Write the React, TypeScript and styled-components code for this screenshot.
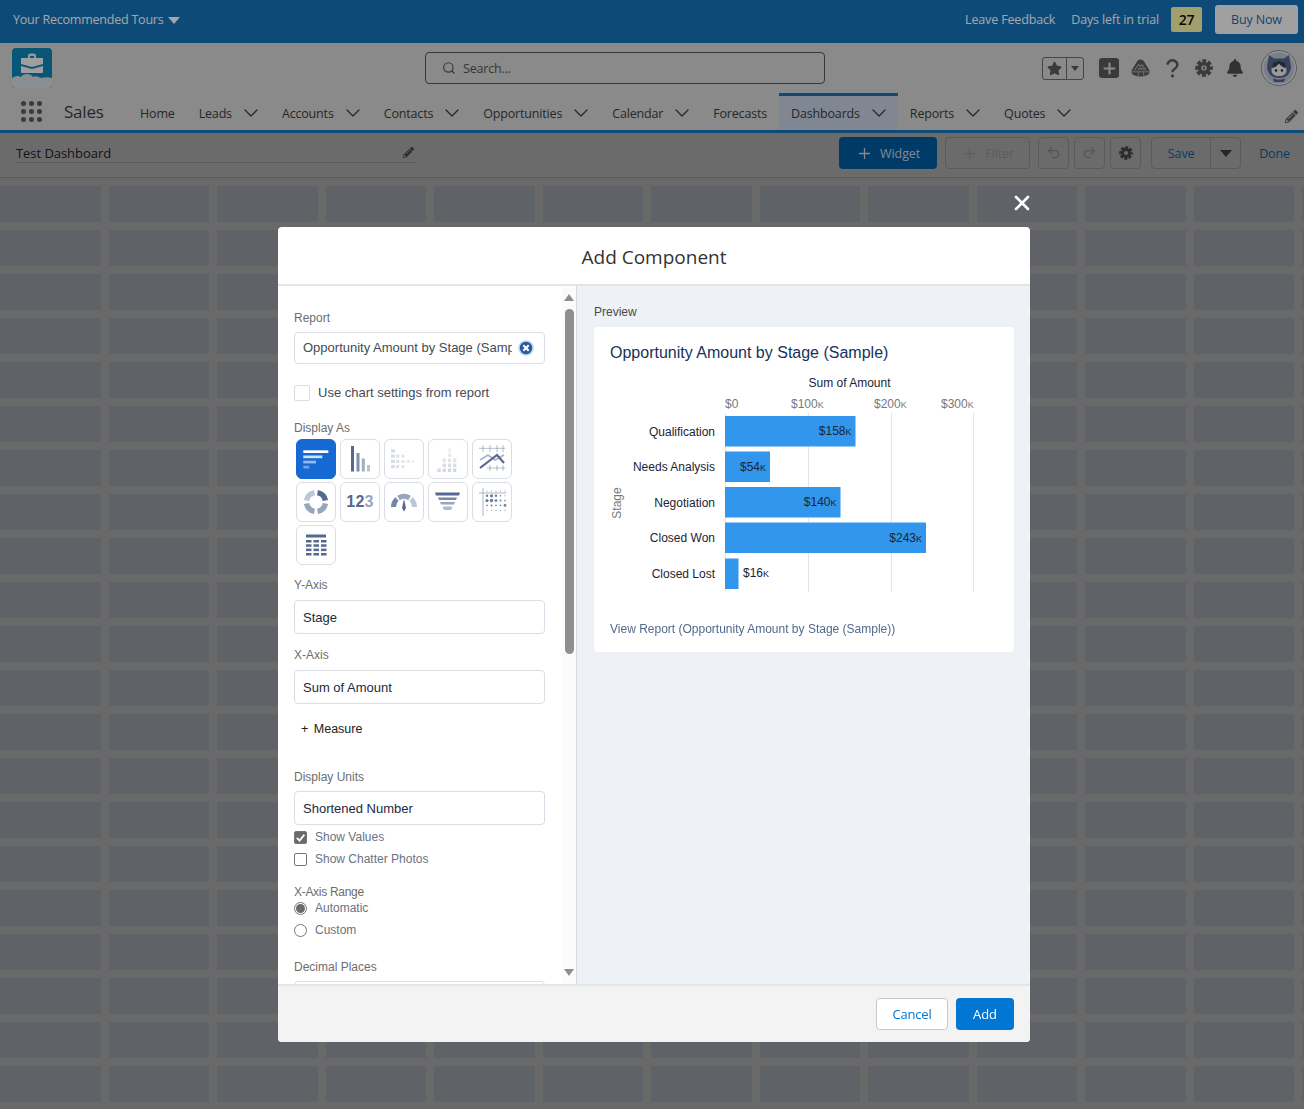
import React from "react";
import styled, { createGlobalStyle } from "styled-components";
import { ChevronDown, Plus, Redo2, Search, Undo2, X } from "lucide-react";
import { FaBell, FaPencilAlt, FaStar } from "react-icons/fa";

const BRAND = `"Open Sans", "Noto Sans", sans-serif`;
const ARIAL = `"Liberation Sans", Arial, sans-serif`;

const GlobalStyle = createGlobalStyle`
	html, body {
		margin: 0;
		padding: 0;
		background: #a1a1a1;
		font-family: ${BRAND};
		overflow: hidden;
	}
	* {
		box-sizing: border-box;
	}
`;

const NAV_ITEMS: { label: string; menu: boolean; active?: boolean }[] = [
	{ label: "Home", menu: false },
	{ label: "Leads", menu: true },
	{ label: "Accounts", menu: true },
	{ label: "Contacts", menu: true },
	{ label: "Opportunities", menu: true },
	{ label: "Calendar", menu: true },
	{ label: "Forecasts", menu: false },
	{ label: "Dashboards", menu: true, active: true },
	{ label: "Reports", menu: true },
	{ label: "Quotes", menu: true },
];

const BARS = [
	{ label: "Qualification", value: "$158", top: 416, right: 855.5, labelY: 436, valueY: 435, inside: true },
	{ label: "Needs Analysis", value: "$54", top: 451.5, right: 770, labelY: 471, valueY: 471, inside: true },
	{ label: "Negotiation", value: "$140", top: 487, right: 840.5, labelY: 507, valueY: 506, inside: true },
	{ label: "Closed Won", value: "$243", top: 522.5, right: 926, labelY: 542, valueY: 542, inside: true },
	{ label: "Closed Lost", value: "$16", top: 558.5, right: 738.5, labelY: 578, valueY: 577, inside: false },
];

const TICKS = [
	{ label: "$0", x: 725, line: 725.5 },
	{ label: "$100", x: 791, line: 808.5 },
	{ label: "$200", x: 874, line: 891.5 },
	{ label: "$300", x: 941, line: 973.5 },
];

const App: React.FC = () => {
	return (
		<>
			<GlobalStyle />
			<Page>
				<TrialBar>
					<TourMenu>
						Your Recommended Tours <Caret />
					</TourMenu>
					<TrialActions>
						<span>Leave Feedback</span>
						<span>Days left in trial</span>
						<DaysBadge>27</DaysBadge>
						<BuyButton>Buy Now</BuyButton>
					</TrialActions>
				</TrialBar>
				<GlobalHeader>
					<Logo />
					<SearchBox>
						<Search size={14} strokeWidth={2} />
						Search...
					</SearchBox>
					<HeaderIcons>
						<FavoriteGroup>
							<FavoriteStar>
								<FaStar size={15} />
							</FavoriteStar>
							<FavoriteMenu>
								<SmallCaret />
							</FavoriteMenu>
						</FavoriteGroup>
						<IconSlots>
							<IconSlot>
								<AddIcon>
									<Plus size={17} strokeWidth={3} />
								</AddIcon>
							</IconSlot>
							<IconSlot>
								<TrailheadIcon />
							</IconSlot>
							<IconSlot>
								<QuestionIcon />
							</IconSlot>
							<IconSlot>
								<GearIcon size={18} color="#5a5a5a" bolt />
							</IconSlot>
							<IconSlot>
								<FaBell size={18} color="#4e4e4e" />
							</IconSlot>
						</IconSlots>
						<Avatar />
					</HeaderIcons>
				</GlobalHeader>
				<NavBar>
					<Waffle>
						{Array.from({ length: 9 }).map((_, i) => (
							<i key={i} />
						))}
					</Waffle>
					<AppName>Sales</AppName>
					<NavList>
						{NAV_ITEMS.map((item) => (
							<NavItem key={item.label} $active={item.active}>
								{item.label}
								{item.menu && (
									<NavChevron>
										<ChevronDown size={24} strokeWidth={1.3} />
									</NavChevron>
								)}
							</NavItem>
						))}
					</NavList>
					<NavEdit>
						<FaPencilAlt size={13} color="#5a5a5a" />
					</NavEdit>
				</NavBar>
				<Toolbar>
					<TitleField>
						Test Dashboard
						<FaPencilAlt size={11} color="#444" />
					</TitleField>
					<ToolbarActions>
						<WidgetButton>
							<Plus size={17} strokeWidth={1.8} />
							Widget
						</WidgetButton>
						<FilterButton>
							<Plus size={17} strokeWidth={1.8} />
							Filter
						</FilterButton>
						<IconButton $muted>
							<Undo2 size={15} />
						</IconButton>
						<IconButton $muted>
							<Redo2 size={15} />
						</IconButton>
						<IconButton>
							<GearIcon size={14} color="#444" />
						</IconButton>
						<SaveGroup>
							<SaveLabel>Save</SaveLabel>
							<SaveMenu>
								<Caret $dark />
							</SaveMenu>
						</SaveGroup>
						<DoneLink>Done</DoneLink>
					</ToolbarActions>
				</Toolbar>
				<DashboardGrid>
					{Array.from({ length: 13 * 21 }).map((_, i) => (
						<GridCell key={i} />
					))}
				</DashboardGrid>
			</Page>

			<Backdrop>
				<Modal>
					<CloseButton>
						<X size={24} strokeWidth={2.6} />
					</CloseButton>
					<ModalHeader>Add Component</ModalHeader>
					<ModalBody>
						<FormPane>
							<FormColumn>
								<FieldLabel $top={25}>Report</FieldLabel>
								<ReportInput>
									<ReportText>Opportunity Amount by Stage (Sample)</ReportText>
									<ClearIcon />
								</ReportInput>
								<ReportToggle>
									<LargeCheck />
									Use chart settings from report
								</ReportToggle>
								<FieldLabel $top={21}>Display As</FieldLabel>
								<TileGrid>
									<Tile $active>
										<HBarTile />
									</Tile>
									<Tile>
										<VBarTile />
									</Tile>
									<Tile>
										<StackedHTile />
									</Tile>
									<Tile>
										<StackedVTile />
									</Tile>
									<Tile>
										<LineTile />
									</Tile>
									<Tile>
										<DonutTile />
									</Tile>
									<Tile>
										<Metric>
											12<span>3</span>
										</Metric>
									</Tile>
									<Tile>
										<GaugeTile />
									</Tile>
									<Tile>
										<FunnelTile />
									</Tile>
									<Tile>
										<HeatTile />
									</Tile>
									<Tile>
										<TableTile />
									</Tile>
								</TileGrid>
								<FieldLabel $top={13}>Y-Axis</FieldLabel>
								<TextInput>Stage</TextInput>
								<FieldLabel $top={14}>X-Axis</FieldLabel>
								<TextInput>Sum of Amount</TextInput>
								<MeasureLink>
									<span>+</span> Measure
								</MeasureLink>
								<FieldLabel $top={33}>Display Units</FieldLabel>
								<TextInput $tight>Shortened Number</TextInput>
								<OptionRow $top={1}>
									<SmallCheck $checked>
										<svg viewBox="0 0 12 12" width="11" height="11">
											<path d="M2 6.5 5 9.4 10.2 2.8" fill="none" stroke="#fff" strokeWidth="2" />
										</svg>
									</SmallCheck>
									Show Values
								</OptionRow>
								<OptionRow $top={0}>
									<SmallCheck />
									Show Chatter Photos
								</OptionRow>
								<FieldLabel $top={15} $narrow>
									X-Axis Range
								</FieldLabel>
								<OptionRow $top={-3}>
									<Radio $checked />
									Automatic
								</OptionRow>
								<OptionRow $top={0}>
									<Radio />
									Custom
								</OptionRow>
								<FieldLabel $top={19}>Decimal Places</FieldLabel>
								<TextInput $tight />
							</FormColumn>
							<ScrollTrack>
								<ScrollArrow $up />
								<ScrollThumb />
								<ScrollArrow />
							</ScrollTrack>
						</FormPane>
						<PreviewPane>
							<PreviewLabel>Preview</PreviewLabel>
							<PreviewCard>
								<CardTitle>Opportunity Amount by Stage (Sample)</CardTitle>
								<BarChart />
								<ReportLink>View Report (Opportunity Amount by Stage (Sample))</ReportLink>
							</PreviewCard>
						</PreviewPane>
					</ModalBody>
					<ModalFooter>
						<CancelButton>Cancel</CancelButton>
						<AddButton>Add</AddButton>
					</ModalFooter>
				</Modal>
			</Backdrop>
		</>
	);
};
export default App;

/* ---- drawings ---- */

const Logo = () => (
	<LogoBox>
		<svg viewBox="0 0 40 40" width="40" height="40">
			<rect width="40" height="40" rx="4" fill="#0e86b8" />
			<path d="M0 30c3-2 6-3 9-1 2-4 10-4 12 0 3-2 6 0 8 1 3-1 7-1 11 0v6a4 4 0 0 1-4 4H4a4 4 0 0 1-4-4z" fill="#d5dade" />
			<path d="M16 10V7.500c0-1 1-2 2-2h4c1 0 2 1 2 2V10h-2V8h-4v2z" fill="#e9e9e9" />
			<path d="M10 10h20c.6 0 1 .4 1 1v5l-11 3-11-3v-5c0-.6.4-1 1-1z" fill="#f4f4f4" />
			<path d="M9 18l11 3 11-3v6c0 .6-.4 1-1 1H10c-.6 0-1-.4-1-1z" fill="#f4f4f4" />
		</svg>
	</LogoBox>
);

const TrailheadIcon = () => (
	<svg viewBox="0 0 22 22" width="21" height="21">
		<path d="M11 1.500c2 0 3 1 4 2.600l4.800 8c1.400 2.400.6 5-2 6-2 .8-4.400 1.400-6.800 1.400s-4.800-.6-6.800-1.400c-2.600-1-3.400-3.600-2-6l4.800-8C8 2.500 9 1.500 11 1.500z" fill="#5a5a5a" />
		<path d="M4.500 13 9 7l2 2 1.500-2 4.500 6M8 13l2-2.500 1.500 1.500 1.500-1.500 2 2.500" fill="none" stroke="#a5a5a5" strokeWidth="1.200" />
		<path d="M1.500 14.500h19M9 15l-1 5M14 15l1 5" stroke="#b5b5b5" strokeWidth="1" />
	</svg>
);

const QuestionIcon = () => (
	<svg viewBox="0 0 14 20" width="13" height="19">
		<path d="M1.800 6a5.200 4.800 0 1 1 8 4c-2 1.300-2.800 2.200-2.800 4" fill="none" stroke="#5a5a5a" strokeWidth="2.600" />
		<circle cx="7" cy="18" r="1.700" fill="#5a5a5a" />
	</svg>
);

const GearIcon: React.FC<{ size: number; color: string; bolt?: boolean }> = ({ size, color, bolt }) => (
	<svg viewBox="0 0 20 20" width={size} height={size}>
		<circle cx="10" cy="10" r="5" fill="none" stroke={color} strokeWidth="4" />
		<circle cx="10" cy="10" r="8.200" fill="none" stroke={color} strokeWidth="3.200" strokeDasharray="4.440 2" strokeDashoffset="2.200" />
		{bolt ? <path d="M11 6.500 8 10.500h2L9 13.500l3-4h-2z" fill={color} /> : null}
	</svg>
);

const Avatar = () => (
	<svg viewBox="0 0 36 36" width="36" height="36">
		<circle cx="18" cy="18" r="17.500" fill="#dfe3e8" stroke="#8a8a8a" />
		<circle cx="18" cy="18" r="15.500" fill="#bcc4cf" />
		<path d="M8 5l5 3.500h10L28 5l1.500 9c1 3 .5 6-1.500 9-1 3-5 5-10 5s-9-2-10-5c-2-3-2.500-6-1.500-9z" fill="#54698d" />
		<path d="M10.500 20c0-4 3-6.500 7.500-6.500s7.500 2.500 7.500 6.500-3 6-7.500 6-7.500-2-7.500-6z" fill="#ececec" />
		<path d="M11 18c3-.5 5-2 7-4.500 2 2.500 4 4 7 4.500l-1-5-6-2-6 2z" fill="#2f3f57" />
		<circle cx="15" cy="20.500" r="1.200" fill="#222" />
		<circle cx="21" cy="20.500" r="1.200" fill="#222" />
		<path d="M12 28c3 2 9 2 12 0l-1 4H13z" fill="#54698d" />
	</svg>
);

const TILE_DARK = "#54698d";

const HBarTile = () => (
	<svg viewBox="0 0 40 40" width="40" height="40">
		<rect x="7.300" y="11.300" width="25" height="2.700" fill="#fff" />
		<rect x="7.300" y="16.500" width="19" height="2.700" fill="#fff" opacity=".8" />
		<rect x="7.300" y="21.700" width="12.700" height="2.700" fill="#fff" opacity=".55" />
		<rect x="7.300" y="26.800" width="6" height="2.700" fill="#fff" opacity=".4" />
	</svg>
);

const VBarTile = () => (
	<svg viewBox="0 0 40 40" width="40" height="40">
		<rect x="11" y="7" width="3" height="25.500" fill={TILE_DARK} />
		<rect x="16.500" y="14" width="3" height="18.500" fill={TILE_DARK} opacity=".75" />
		<rect x="21.800" y="19.500" width="3" height="13" fill={TILE_DARK} opacity=".55" />
		<rect x="27" y="26" width="3" height="6.500" fill={TILE_DARK} opacity=".4" />
	</svg>
);

const StackedHTile = () => {
	const rows = [
		[4, 0, 0, 0, 0],
		[4, 3, 3, 0, 0],
		[4, 3, 3, 3, 2],
		[4, 3, 3, 0, 0],
	];
	return (
		<svg viewBox="0 0 40 40" width="40" height="40">
			{rows.flatMap((row, r) =>
				row.map((w, c) =>
					w ? (
						<rect
							key={`${r}-${c}`}
							x={7 + c * 5.200}
							y={10.500 + r * 5.200}
							width={w}
							height="3"
							fill={TILE_DARK}
							opacity={0.24 - c * 0.03}
						/>
					) : null
				)
			)}
		</svg>
	);
};

const StackedVTile = () => {
	const cols = [1, 3, 5, 3];
	return (
		<svg viewBox="0 0 40 40" width="40" height="40">
			{cols.flatMap((n, c) =>
				Array.from({ length: n }).map((_, r) => (
					<rect
						key={`${c}-${r}`}
						x={9.500 + c * 5.200}
						y={29.500 - r * 5}
						width="3.200"
						height="3.600"
						fill={TILE_DARK}
						opacity={0.26 - r * 0.04}
					/>
				))
			)}
		</svg>
	);
};

const LineTile = () => (
	<svg viewBox="0 0 40 40" width="40" height="40">
		<path d="M7 9.300h26M15 29h18M11 6v7M18 6v7M25 6v7M31 6v7M18 26v6M25 26v6M31 26v6" stroke={TILE_DARK} strokeWidth=".8" opacity=".55" fill="none" />
		<path d="M8 21l8-5 7 5 9-5" stroke={TILE_DARK} strokeWidth="1.800" opacity=".5" fill="none" />
		<path d="M8 29l17-13 7 8" stroke={TILE_DARK} strokeWidth="2.200" fill="none" />
	</svg>
);

const DonutTile = () => (
	<svg viewBox="0 0 40 40" width="40" height="40">
		<circle cx="20" cy="20" r="9.500" fill="none" stroke="#fff" strokeWidth="5.500" />
		<path d="M21.500 10.600A9.500 9.500 0 0 1 29.400 18.500" fill="none" stroke={TILE_DARK} strokeWidth="5.500" />
		<path d="M29.400 21.500A9.500 9.500 0 0 1 21.500 29.400M18.500 29.400A9.500 9.500 0 0 1 10.600 21.500" fill="none" stroke="#98a5ba" strokeWidth="5.500" />
		<path d="M10.600 18.500A9.500 9.500 0 0 1 18.500 10.600" fill="none" stroke="#bcc6d5" strokeWidth="5.500" />
	</svg>
);

const GaugeTile = () => (
	<svg viewBox="0 0 40 40" width="40" height="40">
		<path d="M9.500 25a10.500 10.500 0 0 1 3.500-8" fill="none" stroke="#7386a4" strokeWidth="5" />
		<path d="M14.500 16a10.500 10.500 0 0 1 11 0" fill="none" stroke="#98a5ba" strokeWidth="5" />
		<path d="M27 17a10.500 10.500 0 0 1 3.500 8" fill="none" stroke="#bcc6d5" strokeWidth="5" />
		<path d="M20 17l2 9-2 3.500-2-3.500z" fill={TILE_DARK} />
	</svg>
);

const FunnelTile = () => (
	<svg viewBox="0 0 40 40" width="40" height="40">
		<path d="M7 10.500h25l-1 3H8z" fill={TILE_DARK} />
		<path d="M10 15.500h19l-1 2.500H11z" fill={TILE_DARK} opacity=".8" />
		<path d="M12 20h15l-1 2.500H13z" fill={TILE_DARK} opacity=".6" />
		<path d="M14.500 24.500h10l-1.500 3.500h-7z" fill={TILE_DARK} opacity=".45" />
	</svg>
);

const HeatTile = () => {
	const sizes = [
		[0.5, 0.5, 0.5, 0.5, 0.5],
		[1.2, 1.600, 1.200, 0.8, 0.5],
		[1.600, 1.800, 1.400, 1.000, 0.8],
		[0.8, 1.000, 0.8, 0.8, 1.400],
		[0.5, 0.5, 0.5, 0.5, 0.5],
	];
	return (
		<svg viewBox="0 0 40 40" width="40" height="40">
			<path d="M7 11h27M11 6v28" stroke={TILE_DARK} strokeWidth="1" opacity=".5" />
			{sizes.flatMap((row, r) =>
				row.map((s, c) => (
					<circle key={`${r}-${c}`} cx={15 + c * 4.500} cy={9 + r * 4.800} r={s} fill={TILE_DARK} opacity=".85" />
				))
			)}
		</svg>
	);
};

const TableTile = () => (
	<svg viewBox="0 0 40 40" width="40" height="40">
		<rect x="10" y="9.500" width="20" height="3" fill={TILE_DARK} />
		{[15, 19.300, 23.600, 28].flatMap((y) =>
			[10, 17.500, 25].map((x) => <rect key={`${x}-${y}`} x={x} y={y} width="5.500" height="2.500" fill={TILE_DARK} />)
		)}
	</svg>
);

const ClearIcon = () => (
	<svg viewBox="0 0 16 16" width="16" height="16">
		<circle cx="8" cy="8" r="7.800" fill="#bcd6f5" />
		<circle cx="8" cy="8" r="6.200" fill="#2a5a99" />
		<path d="M5.300 5.300l5.400 5.400M10.700 5.300l-5.400 5.400" stroke="#fff" strokeWidth="2" />
	</svg>
);

const CHART_INK = "#1a2433";

const BarChart = () => (
	<ChartSvg viewBox="594 370 420 225" width="420" height="225">
		<text x="849.500" y="386.500" textAnchor="middle" fill={CHART_INK}>
			Sum of Amount
		</text>
		{TICKS.map((t) => (
			<g key={t.label}>
				<text x={t.x} y="408" fill="#76787c">
					{t.label}
					{t.label !== "$0" && <tspan fontSize="9">K</tspan>}
				</text>
				<line x1={t.line} x2={t.line} y1="413" y2="592" stroke="#e0e5ee" />
			</g>
		))}
		<text transform="translate(621 503) rotate(-90)" textAnchor="middle" fill="#76787c">
			Stage
		</text>
		{BARS.map((b) => (
			<g key={b.label}>
				<text x="715" y={b.labelY} textAnchor="end" fill={CHART_INK}>
					{b.label}
				</text>
				<rect x="725" y={b.top} width={b.right - 725} height="30.500" fill="#3296ed" />
				<text x={b.inside ? b.right - 4 : b.right + 4.500} y={b.valueY} textAnchor={b.inside ? "end" : "start"} fill={CHART_INK}>
					{b.value}
					<tspan fontSize="9">K</tspan>
				</text>
			</g>
		))}
	</ChartSvg>
);

/* ---- page underneath the dialog ---- */

const Page = styled.div`
	width: 1304px;
	height: 1109px;
	overflow: hidden;
	display: flex;
	flex-direction: column;
`;

const TrialBar = styled.div`
	height: 43px;
	flex: none;
	background: #1472b9;
	color: #fff;
	font-size: 12.5px;
	letter-spacing: -0.15px;
	display: flex;
	align-items: center;
	justify-content: space-between;
	padding: 0 6px 4px 13px;
`;

const TourMenu = styled.div`
	display: flex;
	align-items: center;
	gap: 5px;
	letter-spacing: -0.22px;
`;

const Caret = styled.i<{ $dark?: boolean }>`
	display: block;
	width: 0;
	height: 0;
	margin-top: 2px;
	border-left: 6px solid transparent;
	border-right: 6px solid transparent;
	border-top: 7px solid ${(p) => (p.$dark ? "#3a3a3a" : "#fff")};
`;

const SmallCaret = styled.i`
	display: block;
	width: 0;
	height: 0;
	border-left: 4px solid transparent;
	border-right: 4px solid transparent;
	border-top: 5px solid #5a5a5a;
`;

const TrialActions = styled.div`
	display: flex;
	align-items: center;
	gap: 16px;
`;

const DaysBadge = styled.div`
	width: 31px;
	height: 25px;
	margin: 0 -3px 0 -4px;
	border-radius: 2px;
	background: #fbf3a8;
	color: #111;
	font-weight: 600;
	font-size: 14px;
	display: flex;
	align-items: center;
	justify-content: center;
`;

const BuyButton = styled.div`
	width: 83px;
	height: 29px;
	border-radius: 3px;
	background: #f6f6f6;
	color: #1a6ab0;
	display: flex;
	align-items: center;
	justify-content: center;
`;

const GlobalHeader = styled.div`
	height: 50px;
	flex: none;
	background: #d4d4d4;
	position: relative;
	display: flex;
	padding: 5px 7px 0 12px;
`;

const LogoBox = styled.div`
	width: 40px;
	height: 40px;
	flex: none;
`;

const SearchBox = styled.div`
	width: 400px;
	height: 32px;
	margin: 4px 0 0 373px;
	border: 1px solid #555;
	border-radius: 4px;
	background: #d4d4d4;
	color: #555;
	font-size: 12.5px;
	letter-spacing: -0.2px;
	padding-left: 16px;
	display: flex;
	align-items: center;
	gap: 7px;
`;

const HeaderIcons = styled.div`
	margin-left: auto;
	height: 36px;
	margin-top: 2px;
	display: flex;
	align-items: center;
	gap: 10px;
`;

const IconSlots = styled.div`
	display: flex;
	align-items: center;
`;

const IconSlot = styled.div`
	width: 31.5px;
	display: flex;
	align-items: center;
	justify-content: center;
`;

const FavoriteGroup = styled.div`
	width: 42px;
	height: 23px;
	border: 1px solid #6b6b6b;
	border-radius: 3px;
	display: flex;
	color: #5a5a5a;
`;

const FavoriteStar = styled.div`
	width: 24px;
	border-right: 1px solid #6b6b6b;
	display: flex;
	align-items: center;
	justify-content: center;
`;

const FavoriteMenu = styled.div`
	flex: 1;
	display: flex;
	align-items: center;
	justify-content: center;
`;

const AddIcon = styled.div`
	width: 20px;
	height: 20px;
	border-radius: 3px;
	background: #5a5a5a;
	color: #d4d4d4;
	display: flex;
	align-items: center;
	justify-content: center;
`;

const NavBar = styled.div`
	height: 40px;
	flex: none;
	background: #d4d4d4;
	border-bottom: 3px solid #1472b9;
	display: flex;
	align-items: stretch;
	padding-left: 21px;
	position: relative;
`;

const Waffle = styled.div`
	width: 21px;
	height: 21px;
	margin-top: 8px;
	display: grid;
	grid-template-columns: repeat(3, 5px);
	grid-auto-rows: 5px;
	gap: 3px;
	i {
		border-radius: 50%;
		background: #5a5a5a;
	}
`;

const AppName = styled.div`
	width: 64px;
	margin-left: 22px;
	font-size: 17px;
	letter-spacing: -0.2px;
	color: #3c3c3c;
	line-height: 38px;
`;

const NavList = styled.div`
	display: flex;
	margin-left: 0;
`;

const NavItem = styled.div<{ $active?: boolean }>`
	padding: 0 12px;
	height: 37px;
	display: flex;
	align-items: center;
	font-size: 12.5px;
	letter-spacing: -0.17px;
	color: #3c3c3c;
	background: ${(p) => (p.$active ? "#c5d0e2" : "transparent")};
	border-top: 3px solid ${(p) => (p.$active ? "#1472b9" : "transparent")};
`;

const NavChevron = styled.span`
	display: flex;
	margin: 0 -5px 0 7px;
`;

const NavEdit = styled.div`
	position: absolute;
	right: 6px;
	top: 13px;
`;

const Toolbar = styled.div`
	height: 45px;
	flex: none;
	background: #a5a5a5;
	border-bottom: 1px solid #8c8c8c;
	display: flex;
	align-items: center;
	justify-content: space-between;
	padding: 0 14px 5px 16px;
`;

const TitleField = styled.div`
	width: 400px;
	height: 19px;
	border-bottom: 1px solid #8c8c8c;
	margin-top: 1px;
	font-size: 13px;
	line-height: 18px;
	letter-spacing: -0.05px;
	color: #222;
	display: flex;
	align-items: center;
	justify-content: space-between;
	padding-right: 2px;
`;

const ToolbarActions = styled.div`
	display: flex;
	align-items: center;
	font-size: 12.5px;
	letter-spacing: -0.1px;
`;

const WidgetButton = styled.div`
	width: 98px;
	height: 32px;
	border-radius: 4px;
	background: #00599d;
	color: #c9d4de;
	padding-top: 1px;
	display: flex;
	align-items: center;
	justify-content: center;
	gap: 7px;
`;

const FilterButton = styled.div`
	width: 85px;
	height: 32px;
	margin-left: 8px;
	border-radius: 4px;
	border: 1px solid #8c8c8c;
	color: #8f8f8f;
	padding-top: 1px;
	display: flex;
	align-items: center;
	justify-content: center;
	gap: 7px;
`;

const IconButton = styled.div<{ $muted?: boolean }>`
	width: 31px;
	height: 32px;
	margin-left: 5px;
	border-radius: 4px;
	border: 1px solid #8c8c8c;
	color: ${(p) => (p.$muted ? "#848484" : "#444")};
	display: flex;
	align-items: center;
	justify-content: center;
	&:nth-of-type(3) {
		margin-left: 8px;
	}
`;

const SaveGroup = styled.div`
	width: 90px;
	height: 32px;
	margin-left: 10px;
	border-radius: 4px;
	border: 1px solid #8c8c8c;
	display: flex;
`;

const SaveLabel = styled.div`
	width: 59px;
	color: #0f5a96;
	border-right: 1px solid #8c8c8c;
	padding-top: 1px;
	display: flex;
	align-items: center;
	justify-content: center;
`;

const SaveMenu = styled.div`
	flex: 1;
	display: flex;
	align-items: center;
	justify-content: center;
`;

const DoneLink = styled.div`
	margin-left: 18px;
	padding-top: 1px;
	color: #0f5a96;
`;

const DashboardGrid = styled.div`
	flex: 1;
	min-height: 0;
	overflow: hidden;
	padding-top: 8px;
	display: grid;
	grid-template-columns: repeat(13, 100.5px);
	grid-auto-rows: 36px;
	gap: 8px;
`;

const GridCell = styled.div`
	background: #92979e;
`;

/* ---- dialog ---- */

const Backdrop = styled.div`
	position: fixed;
	inset: 0;
	background: rgba(0, 0, 0, 0.35);
	display: flex;
	justify-content: center;
	align-items: flex-start;
	padding-top: 227px;
`;

const Modal = styled.div`
	position: relative;
	width: 752px;
	height: 815px;
	margin-left: 4px;
	border-radius: 4px;
	background: #fff;
	display: flex;
	flex-direction: column;
`;

const CloseButton = styled.div`
	position: absolute;
	top: -36px;
	right: -4px;
	color: #fff;
	display: flex;
`;

const ModalHeader = styled.div`
	height: 59px;
	flex: none;
	border-bottom: 2px solid #e5e5e5;
	display: flex;
	align-items: center;
	justify-content: center;
	font-size: 19px;
	color: #333;
	padding-top: 3px;
`;

const ModalBody = styled.div`
	flex: 1;
	min-height: 0;
	display: flex;
`;

const FormPane = styled.div`
	width: 299px;
	flex: none;
	display: flex;
	border-right: 1px solid #dddbda;
`;

const FormColumn = styled.div`
	width: 284px;
	flex: none;
	padding: 0 17px 0 16px;
	overflow: hidden;
	display: flex;
	flex-direction: column;
	font-family: ${ARIAL};
`;

const FieldLabel = styled.label<{ $top: number; $narrow?: boolean }>`
	display: block;
	flex: none;
	margin-top: ${(p) => p.$top}px;
	height: 15px;
	font-size: 12px;
	line-height: 15px;
	letter-spacing: ${(p) => (p.$narrow ? "-0.3px" : "0")};
	color: #6b6d70;
`;

const TextInput = styled.div<{ $tight?: boolean }>`
	flex: none;
	width: 251px;
	height: 34px;
	margin-top: ${(p) => (p.$tight ? 6 : 7)}px;
	border: 1px solid #d8dde6;
	border-radius: 4px;
	padding: 0 8px;
	font-size: 13px;
	line-height: 33px;
	color: #1c2a40;
`;

const ReportInput = styled(TextInput)`
	height: 32px;
	margin-top: 6px;
	position: relative;
	line-height: 30px;
	display: flex;
	align-items: center;
	justify-content: space-between;
	padding-right: 10px;
	color: #444b55;
`;

const ReportText = styled.div`
	width: 209px;
	white-space: nowrap;
	overflow: hidden;
`;

const ReportToggle = styled.div`
	flex: none;
	margin-top: 20px;
	height: 16px;
	display: flex;
	align-items: center;
	gap: 8px;
	font-size: 13px;
	color: #444b55;
`;

const LargeCheck = styled.i`
	display: block;
	width: 16px;
	height: 16px;
	margin-top: 2px;
	border: 1px solid #d8dde6;
	border-radius: 2px;
`;

const TileGrid = styled.div`
	flex: none;
	margin: 3px 0 0 2px;
	display: grid;
	grid-template-columns: repeat(5, 40px);
	grid-auto-rows: 40px;
	gap: 3px 4px;
`;

const Tile = styled.div<{ $active?: boolean }>`
	border-radius: 6px;
	border: 1px solid ${(p) => (p.$active ? "#1669d2" : "#d8dde6")};
	background: ${(p) => (p.$active ? "#1669d2" : "#fff")};
	display: flex;
	align-items: center;
	justify-content: center;
	overflow: hidden;
	svg {
		flex: none;
	}
`;

const Metric = styled.div`
	font-family: ${ARIAL};
	font-weight: 700;
	font-size: 16px;
	color: ${TILE_DARK};
	letter-spacing: 0.3px;
	span {
		color: #98a5ba;
	}
`;

const MeasureLink = styled.div`
	flex: none;
	margin: 17px 0 0 7px;
	font-size: 12.5px;
	height: 16px;
	line-height: 16px;
	color: #222;
	span {
		margin-right: 2px;
	}
`;

const OptionRow = styled.div<{ $top: number }>`
	flex: none;
	height: 22px;
	margin-top: ${(p) => p.$top}px;
	display: flex;
	align-items: center;
	gap: 8px;
	font-size: 12px;
	color: #6b7280;
`;

const SmallCheck = styled.i<{ $checked?: boolean }>`
	display: flex;
	align-items: center;
	justify-content: center;
	width: 13px;
	height: 13px;
	border-radius: 2px;
	border: 1px solid #767676;
	background: ${(p) => (p.$checked ? "#6a6a6a" : "#fff")};
`;

const Radio = styled.i<{ $checked?: boolean }>`
	display: flex;
	align-items: center;
	justify-content: center;
	width: 13px;
	height: 13px;
	border-radius: 50%;
	border: 1px solid #767676;
	&::after {
		content: "";
		display: ${(p) => (p.$checked ? "block" : "none")};
		width: 9px;
		height: 9px;
		border-radius: 50%;
		background: #6a6a6a;
	}
`;

const ScrollTrack = styled.div`
	width: 14px;
	flex: none;
	background: #fbfbfb;
	display: flex;
	flex-direction: column;
	align-items: center;
	padding-top: 8px;
`;

const ScrollArrow = styled.i<{ $up?: boolean }>`
	display: block;
	width: 0;
	height: 0;
	border-left: 5px solid transparent;
	border-right: 5px solid transparent;
	${(p) => (p.$up ? "border-bottom: 7px solid #8f8f8f;" : "border-top: 7px solid #8f8f8f;")}
`;

const ScrollThumb = styled.div`
	width: 9px;
	height: 345px;
	margin: 8px 0 315px;
	border-radius: 5px;
	background: #8f8f8f;
`;

const PreviewPane = styled.div`
	flex: 1;
	background: #eef1f6;
	padding: 19px 16px 0 17px;
	font-family: ${ARIAL};
`;

const PreviewLabel = styled.div`
	font-size: 12px;
	height: 14px;
	line-height: 14px;
	color: #4a4a4a;
`;

const PreviewCard = styled.div`
	margin-top: 8px;
	width: 420px;
	height: 325px;
	border-radius: 4px;
	background: #fff;
	display: flex;
	flex-direction: column;
`;

const CardTitle = styled.div`
	margin: 17px 0 0 16px;
	font-size: 16px;
	line-height: 18px;
	color: #16325c;
`;

const ChartSvg = styled.svg`
	display: block;
	margin-top: 8px;
	font-family: ${ARIAL};
	font-size: 12px;
`;

const ReportLink = styled.div`
	margin: 27px 0 0 16px;
	font-size: 12px;
	line-height: 14px;
	color: #54698d;
`;

const ModalFooter = styled.div`
	height: 58px;
	flex: none;
	border-top: 2px solid #e5e5e5;
	border-radius: 0 0 4px 4px;
	background: #f3f3f3;
	display: flex;
	align-items: center;
	justify-content: flex-end;
	gap: 8px;
	padding: 0 16px 0 0;
`;

const CancelButton = styled.div`
	width: 72px;
	height: 32px;
	border-radius: 4px;
	border: 1px solid #c9c9c9;
	background: #fff;
	color: #0176d3;
	font-size: 13px;
	letter-spacing: -0.2px;
	display: flex;
	align-items: center;
	justify-content: center;
`;

const AddButton = styled.div`
	width: 58px;
	height: 32px;
	border-radius: 4px;
	background: #0176d3;
	color: #fff;
	font-size: 13px;
	display: flex;
	align-items: center;
	justify-content: center;
`;
